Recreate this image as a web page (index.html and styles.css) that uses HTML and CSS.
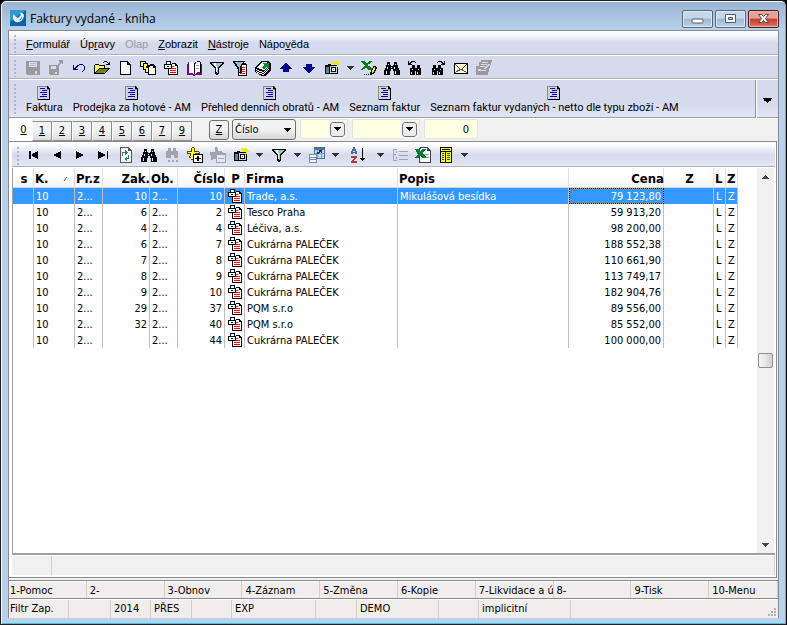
FILE: index.html
```html
<!DOCTYPE html>
<html lang="cs">
<head>
<meta charset="utf-8">
<title>Faktury vydané - kniha</title>
<link rel="stylesheet" href="styles.css">
</head>
<body>
<svg class="sprite" aria-hidden="true">
  <symbol id="save" viewBox="0 0 16 16"><path fill="#9b9b9b" d="M1 1h14v14H2l-1-1z"/><path fill="#d5daed" d="M4 2h8v5H4zM10 11h2v3h-2z"/><path fill="#b8bccb" d="M5 3h6v1H5zM5 5h6v1H5z"/></symbol>
  <symbol id="saveas" viewBox="0 0 16 16"><path fill="#9b9b9b" d="M1 5h10v10H2l-1-1zM11 0h4v4h-1V3h-1v1h-1v1h-1v1h-1V4h1V3h1V2h-1z"/><path fill="#d5daed" d="M3 6h5v3H3zM7 12h2v2H7z"/></symbol>
  <symbol id="undo" viewBox="0 0 16 16"><path fill="#00008b" d="M2 5h1v3h1V7h1V6h1V5h2V4h4v1h1v1h1v4h-1v1h-1v1h-1v-1h1v-1h1V6h-1V5H8v1H7v1H6v1H5v1h2v1H2z"/></symbol>
  <symbol id="open" viewBox="0 0 16 16"><path d="M0 5h1V4h4v1h6v3h5v1h-1v1h-1v1h-1v1h-1v1h-1v1H0zM9 2h1V1h3v1h1v1h1V2h1v3h-4V4h2V3h-1V2h-3v1H9z"/><path fill="#ffff66" d="M1 5h4v1h5v2H5v1H4v1H3v1H2v1H1z"/><path fill="#808000" d="M5 9h9v1h-1v1h-1v1h-1v1H2v-1h1v-1h1v-1h1z"/></symbol>
  <symbol id="page" viewBox="0 0 16 16"><path d="M3 1h8v1h1v1h1v1h1v11H3z"/><path fill="#fff" d="M4 2h6v3h3v9H4z"/></symbol>
  <symbol id="copies" viewBox="0 0 16 16"><path d="M0 1h6v2h2v2h2V4h4v1h1v1h1v9H8v-2H5v-3H3V7H0z"/><path fill="#ffff66" d="M1 2h4v1H3v3H1zM4 4h3v2H6v3H4z"/><path fill="#fff" d="M10 6h3v2h2v6H9V7h1z"/><path fill="#ffff66" d="M6 8h2v4H6z"/></symbol>
  <symbol id="lockdoc" viewBox="0 0 16 16"><path d="M3 1h5v3h1V3h4v1h1v1h1v10H5V9H1V4h2z"/><path fill="#fff" d="M4 2h3v2H4zM2 5h6v3H2zM9 4h3v2h2v8H6V9h3z"/><path d="M4 6h2v1H4z"/><path fill="#f00000" d="M9 6h2v1H9zM9 8h4v1H9zM7 10h6v1H7zM7 12h6v1H7z"/></symbol>
  <symbol id="book" viewBox="0 0 16 16"><path fill="#800080" d="M1 4h1V2h5v1h2V2h5v2h2v11H9v1H7v-1H1z"/><path fill="#fff" d="M3 2h4v1h1v11H7v-1H3zM9 4h1V2h1V1h3v11h-3v1h-1v1H9z"/><path fill="#000" d="M8 3h1v11H8zM11 1h3v1h-3zM14 2h1v11h-1z"/><path fill="#999" d="M10 5h3v1h-3zM10 8h3v1h-3z"/></symbol>
  <symbol id="funnel" viewBox="0 0 16 16"><path d="M1 2h14v2h-1v1h-1v1h-1v1h-1v1h-1v6H9v1H7v-1H6V8H5V7H4V6H3V5H2V4H1z"/><path fill="#8cc" d="M3 3h10v1h-1v1h-1v1h-1v1H9v6H8V7H6V6H5V5H4V4H3z"/><path fill="#fff" d="M5 3h2v3h1v6H7V7H6V6H5z"/></symbol>
  <symbol id="funneldoc" viewBox="0 0 16 16"><path d="M1 1h12v1h-1v1h2v1h1v12H6V9H5V7H4V6H3V4H2V3H1z"/><path fill="#8cc" d="M3 2h8v1h-1v1H9v2H8v6H7V7H6V6H5V4H4V3H3z"/><path fill="#fff" d="M10 5h4v10H7v-2h3z"/><path fill="#f00000" d="M10 7h3v1h-3zM10 9h3v1h-3zM9 11h4v1H9zM8 13h5v1H8z"/></symbol>
  <symbol id="stack" viewBox="0 0 16 16"><path d="M6 1h7l3 3v6l-6 6H7l-7-4V7z"/><path fill="#fff" d="M7 2h5l2 3-5 5-7-2zM1 9l7 3 6-5v1l-6 5-7-3zM1 11l7 3 6-5v1l-6 5-7-3z"/><path fill="#008838" d="M8 3h6v5h-2V7L9 9 6 8l4-3-2-1z"/></symbol>
  <symbol id="up" viewBox="0 0 16 16"><path fill="#00008b" d="M7 3h2v1h1v1h1v1h1v1h1v1h1v1h-3v3H5V9H2V8h1V7h1V6h1V5h1V4h1z"/></symbol>
  <symbol id="down" viewBox="0 0 16 16"><path fill="#00008b" d="M5 4h6v3h3v1h-1v1h-1v1h-1v1h-1v1H9v1H7v-1H6v-1H5v-1H4V9H3V8H2V7h3z"/></symbol>
  <symbol id="camera" viewBox="0 0 16 16"><path d="M1 5h3V4h3v1h7v9H1z"/><path fill="#51898f" d="M2 7h3v6H2z"/><path fill="#c9d2d8" d="M6 6h7v7H6z"/><path d="M7 7h5v5H7z"/><path fill="#fff" d="M8 8h3v3H8z"/><path fill="#268" d="M9 9h1v1H9z"/><path fill="#f1e800" d="M8 1h2v1h1V1h2v1h2v2h1v1h-2v2h-1V5h-3V4H8V3h1V2H8z"/></symbol>
  <symbol id="excelpen" viewBox="0 0 16 16"><path fill="#087b17" d="M0 1h4v1h1v1h2V2h1V1h3v1h-1v1H9v1H7v2h2v1h1v1h1v2H7V9H6V8H4v1H2v1H0V9h1V8h1V7h1V6h1V5H3V4H2V3H1V2H0z"/><path d="M3 14h1v1H3zM5 14h1v1H5zM7 14h1v1H7zM9 15v-3h1v-2h1V8h1V6h3v1h1v2h-1v2h-1v2h-1v1h-2v1z"/><path fill="#ffef00" d="M11 10h1V8h1V7h1v3h-1v2h-1v1h-1z"/></symbol>
  <symbol id="find" viewBox="0 0 16 16"><path d="M3 2h3v3h1v1h2V5h1V2h3v3h1v3h1v2h1v5h-6v-4H9V9H7v2H6v4H0v-5h1V8h1V5h1z"/><path fill="#e7ecf7" d="M4 4h1v1H4zM3 7h1v2H3zM2 11h1v3H2zM11 4h1v1h-1zM10 7h1v2h-1zM11 11h1v3h-1zM7 7h1v1H7z"/></symbol>
  <symbol id="findprev" viewBox="0 0 16 16"><path d="M5 5h3v3h2V5h3v3h1v7H9v-4H8v4H3V8h2zM1 1h1v2h1V2h1V1h4v1h1v1H8V2H5v1H4v1h1v1H1z"/><path fill="#dce2ef" d="M5 9h1v1H5zM4 12h1v2H4zM11 9h1v1h-1zM10 12h1v2h-1z"/></symbol>
  <symbol id="findnext" viewBox="0 0 16 16"><path d="M3 5h3v3h2V5h3v3h2v7H8v-4H7v4H2V8h1zM15 1h-1v2h-1V2h-1V1H8v1H7v1h1V2h3v1h1v1h-1v1h4z"/><path fill="#dce2ef" d="M4 9h1v1H4zM3 12h1v2H3zM10 9h1v1h-1zM9 12h1v2H9z"/></symbol>
  <symbol id="mail" viewBox="0 0 16 16"><path d="M1 3h14v11H1z"/><path fill="#fffbd0" d="M2 4h12v9H2z"/><path fill="#555" d="M2 4l6 5 6-5v1L9 9l5 3v1L8 10l-6 3v-1l5-3-5-4z"/></symbol>
  <symbol id="edit" viewBox="0 0 16 16"><path fill="#9b9b9b" d="M5 0h11v2h-1v3h-1v3h-1v4h-1v3H0V6h3V2h2z"/><path fill="#d5daed" d="M6 2h6v1H6zM5 4h6v1H5zM4 6h5v1H4zM12 4h2L9 9H7zM2 9h3v1h5v1H2z"/></symbol>
  <symbol id="form" viewBox="0 0 16 16"><path fill="#8a8a8a" d="M1 1h12v14H1z"/><path fill="#d0d2d8" d="M2 2h9v3h2v9H2z"/><path d="M11 1h1v1h1v1h1v12H2v-1h11V4h-2z"/><path fill="#0000b0" d="M4 3h5v1H4zM6 5h5v1H6zM4 7h7v1H4zM6 9h5v1H6zM4 11h7v1H4z"/></symbol>
  <symbol id="first" viewBox="0 0 16 16"><path d="M3 4h2v8H3zM12 4v8h-1v-1H9v-1H7V9H6V7h1V6h2V5h2V4z"/></symbol>
  <symbol id="prev" viewBox="0 0 16 16"><path d="M12 4v8h-1v-1H9v-1H7V9H5V7h2V6h2V5h2V4z"/></symbol>
  <symbol id="next" viewBox="0 0 16 16"><path d="M4 4v8h1v-1h2v-1h2V9h2V7H9V6H7V5H5V4z"/></symbol>
  <symbol id="last" viewBox="0 0 16 16"><path d="M12 4h1v8h-1zM3 4v8h1v-1h2v-1h2V9h2V7H8V6H6V5H4V4z"/></symbol>
  <symbol id="refresh" viewBox="0 0 16 16"><path fill="#555" d="M2 0h9v1h1v1h1v1h1v13H2z"/><path fill="#f4faf4" d="M3 1h7v3h3v11H3z"/><path fill="#496f83" d="M7 3l3 2-3 3V6H5v3H4V5h3zM9 14l-3-2 3-3v2h1V8h1v4H9z"/></symbol>
  <symbol id="findgray" viewBox="0 0 16 16"><path fill="#a3a4ab" d="M4 1h3v3h2V1h3v3h2v7h-4V8H7v3H2V4h2zM4 13h2v2H4zM8 13h2v2H8zM12 13h2v2h-2z"/></symbol>
  <symbol id="star" viewBox="0 0 16 16"><path fill="#4c4c00" d="M5 0h2v1h1v3h4v1h1v2H9v4H7v2H4v-2H2V9h1V7H0V4h4V1h1z"/><path fill="#ffff38" d="M5 1h2v4h5v1H8v3H6v3H4v-2H3V9h1V6H1V5h4z"/><path d="M6 7h10v9H6z"/><path fill="#fff" d="M7 8h8v7H7z"/><path d="M8 11h6v1H8zM10 9h2v5h-2z"/></symbol>
  <symbol id="stargray" viewBox="0 0 16 16"><path fill="#a3a4ab" d="M5 0h2v1h1v3h4v1h1v1h3v10H6v-4H3v1H1V8H0V5h5z"/><path fill="#e3e6f2" d="M7 8h8v7H7z"/><path fill="#a3a4ab" d="M8 11h6v1H8z"/></symbol>
  <symbol id="detail" viewBox="0 0 16 16"><path fill="#4472a8" d="M5 0h11v12H5z"/><path fill="#c3d7f0" d="M6 3h9v8H6z"/><path fill="#7d9cc2" d="M8 3h1v8H8zM12 3h1v8h-1zM6 6h9v1H6z"/><path fill="#6d8bad" d="M0 7h8v9H0z"/><path fill="#fff" d="M1 8h6v2H1zM1 11h6v1H1zM1 13h6v2H1z"/><path fill="#234" d="M8 7V5h2V3h3v3h-1V5h-1v1h-1v1z"/></symbol>
  <symbol id="sort" viewBox="0 0 16 16"><path fill="#416c9b" fill-rule="evenodd" d="M3 0h2v2h1v2h1v3H5V6H3v1H1V4h1V2h1zM3 4v1h2V4z"/><path fill="#b13c3c" d="M1 9h6v2H6v1H5v1H4v1h3v2H1v-2h1v-1h1v-1h1v-1H1z"/><path d="M12 1h1v10h2v1h-1v1h-1v1h-1v-1h-1v-1h-1v-1h2z"/></symbol>
  <symbol id="group" viewBox="0 0 16 16"><path fill="#a3a4ab" d="M1 2h4v1H2v4h2v1H2v5h3v1H1zM4 4h1v2H4zM4 10h1v2H4zM7 4h9v1H7zM7 8h9v1H7zM7 12h9v1H7z"/></symbol>
  <symbol id="excel" viewBox="0 0 16 16"><path fill="#444" d="M5 0h8v1h1v1h1v1h1v13H4V1h1z"/><path fill="#fff" d="M6 1h6v3h3v11H5V2h1z"/><path fill="#999" d="M9 7h5v1H9zM9 10h5v1H9z"/><path fill="#087b37" d="M0 2h4v1h1v1h1V3h1V2h4v1h-1v1H9v1H8v2h1v1h1v1h1v2H7v-1H6V9H5v1H4v1H0v-1h1V9h1V8h1V7H2V5H1V3H0z"/></symbol>
  <symbol id="columns" viewBox="0 0 16 16"><path d="M2 0h12v16H2z"/><path fill="#ffff18" d="M3 1h10v3H3zM3 5h4v10H3zM8 5h5v10H8z"/><path fill="#111" d="M4 2h8v1H4z"/><path fill="#0050a0" d="M4 6h2v1H4zM4 8h2v1H4zM4 10h2v1H4zM4 12h2v1H4zM9 6h3v1H9zM9 8h3v1H9zM9 10h3v1H9zM9 12h3v1H9z"/></symbol>
  <symbol id="caret" viewBox="0 0 7 4"><path d="M0 0h7v1H6v1H5v1H4v1H3V3H2V2H1V1H0z"/></symbol>
</svg>

<div class="window">
  <header class="titlebar">
    <svg class="app-icon" viewBox="0 0 16 16" aria-hidden="true"><rect width="16" height="16" fill="#0b62a6"/><path fill="#2f9bd0" d="M0 0h16L0 12z"/><path fill="#eaf6fc" d="M4 4c-2 3-1 7 2 8 4 1 7-2 8-6 0-2-2-4-4-3 1 1 1 2 0 3L8 8 6 7C5 6 4 5 4 4z"/><path fill="#187bbb" d="M8 10c2 0 3-2 4-4 0 3-1 5-4 4z"/></svg>
    <h1 class="title">Faktury vydané - kniha</h1>
    <div class="window-buttons">
      <button class="winbtn" aria-label="Minimalizovat"><svg viewBox="0 0 29 16"><rect x="9" y="8" width="11" height="4" rx="1" fill="#fff" stroke="#545b6b"/></svg></button>
      <button class="winbtn" aria-label="Obnovit"><svg viewBox="0 0 29 16"><path fill="#fff" stroke="#545b6b" fill-rule="evenodd" d="M9.500 3.500h10v8h-10zM12.500 6.500h4v2h-4z"/></svg></button>
      <button class="winbtn close" aria-label="Zavřít"><svg viewBox="0 0 29 16"><path fill="#fff" stroke="#5b3a40" d="M9.500 3.500h3l2 2 2-2h3l-3 4 3 4h-3l-2-2-2 2h-3l3-4z"/></svg></button>
    </div>
  </header>

  <div class="client">
    <nav class="menubar grip">
      <button><u>F</u>ormulář</button><button>Úp<u>r</u>avy</button><button disabled>Olap</button><button><u>Z</u>obrazit</button><button><u>N</u>ástroje</button><button>Nápo<u>v</u>ěda</button>
    </nav>

    <div class="toolbar grip">
      <button aria-label="Uložit"><svg><use href="#save"/></svg></button>
      <button aria-label="Uložit jako"><svg><use href="#saveas"/></svg></button>
      <button aria-label="Zpět"><svg><use href="#undo"/></svg></button>
      <button aria-label="Otevřít"><svg><use href="#open"/></svg></button>
      <button aria-label="Nový"><svg><use href="#page"/></svg></button>
      <button aria-label="Kopie"><svg><use href="#copies"/></svg></button>
      <button aria-label="Zamknout"><svg><use href="#lockdoc"/></svg></button>
      <button aria-label="Kniha"><svg><use href="#book"/></svg></button>
      <button aria-label="Filtr"><svg><use href="#funnel"/></svg></button>
      <button aria-label="Filtr dokladu"><svg><use href="#funneldoc"/></svg></button>
      <button aria-label="Tisk"><svg><use href="#stack"/></svg></button>
      <button aria-label="Nahoru"><svg><use href="#up"/></svg></button>
      <button aria-label="Dolů"><svg><use href="#down"/></svg></button>
      <button aria-label="Snímek"><svg><use href="#camera"/></svg></button>
      <button class="drop" aria-label="Další volby"><svg><use href="#caret"/></svg></button>
      <button aria-label="Export"><svg><use href="#excelpen"/></svg></button>
      <button aria-label="Hledat"><svg><use href="#find"/></svg></button>
      <button aria-label="Hledat předchozí"><svg><use href="#findprev"/></svg></button>
      <button aria-label="Hledat další"><svg><use href="#findnext"/></svg></button>
      <button aria-label="Pošta"><svg><use href="#mail"/></svg></button>
      <button aria-label="Upravit"><svg><use href="#edit"/></svg></button>
    </div>

    <div class="shortcuts grip">
      <button><svg><use href="#form"/></svg>Faktura</button>
      <button><svg><use href="#form"/></svg>Prodejka za hotové - AM</button>
      <button><svg><use href="#form"/></svg>Přehled denních obratů - AM</button>
      <button><svg><use href="#form"/></svg>Seznam faktur</button>
      <button><svg><use href="#form"/></svg>Seznam faktur vydaných - netto dle typu zboží - AM</button>
      <button class="more" aria-label="Více"><svg><use href="#caret"/></svg></button>
    </div>

    <div class="tabrow">
      <div class="tabs">
        <button class="tab active"><u>0</u></button><button class="tab"><u>1</u></button><button class="tab"><u>2</u></button><button class="tab"><u>3</u></button><button class="tab"><u>4</u></button><button class="tab"><u>5</u></button><button class="tab"><u>6</u></button><button class="tab"><u>7</u></button><button class="tab"><u>9</u></button>
      </div>
      <button class="zbtn"><u>Z</u></button>
      <div class="combo"><select aria-label="Řadit podle"><option>Číslo</option></select><svg><use href="#caret"/></svg></div>
      <div class="field from"><input aria-label="Od"><button aria-label="Vybrat od"><svg><use href="#caret"/></svg></button></div>
      <div class="field to"><input aria-label="Do"><button aria-label="Vybrat do"><svg><use href="#caret"/></svg></button></div>
      <div class="field count"><input aria-label="Počet" value="0"></div>
    </div>

    <main class="panel">
      <div class="toolbar gridbar grip">
        <button aria-label="První"><svg><use href="#first"/></svg></button>
        <button aria-label="Předchozí"><svg><use href="#prev"/></svg></button>
        <button aria-label="Následující"><svg><use href="#next"/></svg></button>
        <button aria-label="Poslední"><svg><use href="#last"/></svg></button>
        <button aria-label="Obnovit data"><svg><use href="#refresh"/></svg></button>
        <button aria-label="Hledat v seznamu"><svg><use href="#find"/></svg></button>
        <button aria-label="Hledat dál"><svg><use href="#findgray"/></svg></button>
        <button aria-label="Přidat značku"><svg><use href="#star"/></svg></button>
        <button aria-label="Odebrat značku"><svg><use href="#stargray"/></svg></button>
        <button aria-label="Snímek seznamu"><svg><use href="#camera"/></svg></button>
        <button class="drop" aria-label="Volby snímku"><svg><use href="#caret"/></svg></button>
        <button aria-label="Filtrovat"><svg><use href="#funnel"/></svg></button>
        <button class="drop" aria-label="Volby filtru"><svg><use href="#caret"/></svg></button>
        <button aria-label="Podrobnosti"><svg><use href="#detail"/></svg></button>
        <button class="drop" aria-label="Volby podrobností"><svg><use href="#caret"/></svg></button>
        <button class="wide" aria-label="Seřadit"><svg><use href="#sort"/></svg></button>
        <button class="drop" aria-label="Volby řazení"><svg><use href="#caret"/></svg></button>
        <button aria-label="Seskupit"><svg><use href="#group"/></svg></button>
        <button aria-label="Export do Excelu"><svg><use href="#excel"/></svg></button>
        <button aria-label="Sloupce"><svg><use href="#columns"/></svg></button>
        <button class="drop" aria-label="Volby sloupců"><svg><use href="#caret"/></svg></button>
      </div>

      <div class="grid">
        <div class="grid-body">
          <table>
            <colgroup><col class="c-s"><col class="c-k"><col class="c-pr"><col class="c-num"><col class="c-ob"><col class="c-num"><col class="c-p"><col class="c-firma"><col class="c-popis"><col class="c-cena"><col class="c-z"><col class="c-l"><col class="c-l"></colgroup>
            <thead>
              <tr><th class="mid">s</th><th><span class="sorted">K.<svg viewBox="0 0 5 6" aria-hidden="true"><path d="M1 5L4 1" stroke="#555" fill="none"/></svg></span></th><th>Pr.z</th><th class="num">Zak.</th><th>Ob.</th><th class="num">Číslo</th><th class="mid">P</th><th>Firma</th><th>Popis</th><th class="num">Cena</th><th class="mid">Z</th><th>L</th><th>Z</th></tr>
            </thead>
            <tbody>
              <tr class="selected"><td></td><td>10</td><td>2...</td><td class="num">10</td><td>2...</td><td class="num">10</td><td class="lock"><svg><use href="#lockdoc"/></svg></td><td>Trade, a.s.</td><td>Mikulášová besídka</td><td class="num focus">79 123,80</td><td></td><td>L</td><td>Z</td></tr>
              <tr><td></td><td>10</td><td>2...</td><td class="num">6</td><td>2...</td><td class="num">2</td><td class="lock"><svg><use href="#lockdoc"/></svg></td><td>Tesco Praha</td><td></td><td class="num">59 913,20</td><td></td><td>L</td><td>Z</td></tr>
              <tr><td></td><td>10</td><td>2...</td><td class="num">4</td><td>2...</td><td class="num">4</td><td class="lock"><svg><use href="#lockdoc"/></svg></td><td>Léčiva, a.s.</td><td></td><td class="num">98 200,00</td><td></td><td>L</td><td>Z</td></tr>
              <tr><td></td><td>10</td><td>2...</td><td class="num">6</td><td>2...</td><td class="num">7</td><td class="lock"><svg><use href="#lockdoc"/></svg></td><td>Cukrárna PALEČEK</td><td></td><td class="num">188 552,38</td><td></td><td>L</td><td>Z</td></tr>
              <tr><td></td><td>10</td><td>2...</td><td class="num">7</td><td>2...</td><td class="num">8</td><td class="lock"><svg><use href="#lockdoc"/></svg></td><td>Cukrárna PALEČEK</td><td></td><td class="num">110 661,90</td><td></td><td>L</td><td>Z</td></tr>
              <tr><td></td><td>10</td><td>2...</td><td class="num">8</td><td>2...</td><td class="num">9</td><td class="lock"><svg><use href="#lockdoc"/></svg></td><td>Cukrárna PALEČEK</td><td></td><td class="num">113 749,17</td><td></td><td>L</td><td>Z</td></tr>
              <tr><td></td><td>10</td><td>2...</td><td class="num">9</td><td>2...</td><td class="num">10</td><td class="lock"><svg><use href="#lockdoc"/></svg></td><td>Cukrárna PALEČEK</td><td></td><td class="num">182 904,76</td><td></td><td>L</td><td>Z</td></tr>
              <tr><td></td><td>10</td><td>2...</td><td class="num">29</td><td>2...</td><td class="num">37</td><td class="lock"><svg><use href="#lockdoc"/></svg></td><td>PQM s.r.o</td><td></td><td class="num">89 556,00</td><td></td><td>L</td><td>Z</td></tr>
              <tr><td></td><td>10</td><td>2...</td><td class="num">32</td><td>2...</td><td class="num">40</td><td class="lock"><svg><use href="#lockdoc"/></svg></td><td>PQM s.r.o</td><td></td><td class="num">85 552,00</td><td></td><td>L</td><td>Z</td></tr>
              <tr><td></td><td>10</td><td>2...</td><td class="num"></td><td>2...</td><td class="num">44</td><td class="lock"><svg><use href="#lockdoc"/></svg></td><td>Cukrárna PALEČEK</td><td></td><td class="num">100 000,00</td><td></td><td>L</td><td>Z</td></tr>
            </tbody>
          </table>
        </div>
        <div class="scrollbar">
          <button aria-label="Posunout nahoru"><svg class="flip"><use href="#caret"/></svg></button>
          <div class="thumb"></div>
          <button aria-label="Posunout dolů"><svg><use href="#caret"/></svg></button>
        </div>
      </div>
      <div class="gridfoot"><span></span><span></span></div>
    </main>

    <div class="fkeys">
      <button>1-Pomoc</button><button>2-</button><button>3-Obnov</button><button>4-Záznam</button><button>5-Změna</button><button>6-Kopie</button><button>7-Likvidace a úč</button><button>8-</button><button>9-Tisk</button><button>10-Menu</button>
    </div>
    <footer class="status">
      <span>Filtr Zap.</span><span></span><span>2014</span><span>PŘES</span><span></span><span>EXP</span><span></span><span>DEMO</span><span></span><span>implicitní</span><span class="rest"><svg viewBox="0 0 8 8" aria-hidden="true"><path fill="#b5b0b0" d="M6 0h2v2H6zM3 3h2v2H3zM6 3h2v2H6zM0 6h2v2H0zM3 6h2v2H3zM6 6h2v2H6z"/></svg></span>
    </footer>
  </div>
</div>
</body>
</html>
```
FILE: styles.css
```css
:root {
  --ui: "DejaVu Sans Condensed", "DejaVu Sans", sans-serif;
  --menu: "Liberation Sans", sans-serif;
  --line: #a0a0a4;
  --bar: #d5daed;
}

* { box-sizing: border-box; }

body {
  margin: 0;
  background: #000;
  font: 11px/16px var(--ui);
  color: #000;
}

button, input, select {
  margin: 0;
  padding: 0;
  border: 0;
  background: none;
  font: inherit;
  color: inherit;
}

svg { display: block; shape-rendering: crispEdges; }
.sprite { position: absolute; width: 0; height: 0; }

.window {
  display: flex;
  flex-direction: column;
  min-height: 100vh;
  padding: 0 7px 6px;
  border: 1px solid #202028;
  border-right-color: #000;
  border-radius: 6px 6px 0 0;
  background: linear-gradient(#98b3d2 0, #b9d1ea 30px, #b9d1ea 100%);
  box-shadow: inset 1px 1px 0 #f2f8fd, inset -1px -1px 0 #3cc5d8;
}

/* Title bar */
.titlebar {
  display: flex;
  align-items: center;
  height: 29px;
  padding: 4px 0 0 2px;
}
.app-icon { width: 16px; height: 16px; shape-rendering: auto; }
.title {
  flex: 1;
  margin: 0;
  padding: 2px 0 0 4px;
  font: 12px/18px "Open Sans", "Noto Sans", sans-serif;
}
.window-buttons { display: flex; gap: 2px; padding-top: 2px; }
.winbtn {
  width: 31px;
  height: 18px;
  border: 1px solid #54687f;
  border-radius: 2px;
  background: linear-gradient(#c6d7ea 0 45%, #9fb8d2 50%, #bcd2e8);
  box-shadow: inset 0 0 0 1px #dce9f5;
}
.winbtn svg { width: 29px; height: 16px; shape-rendering: auto; }
.winbtn.close {
  border-color: #4c1a22;
  background: linear-gradient(#e5a196 0 45%, #bf3c27 50%, #d47a62);
  box-shadow: inset 0 0 0 1px #e9b3a8;
}

/* Client area */
.client {
  flex: 1;
  display: flex;
  flex-direction: column;
  border: 1px solid #8a8a8e;
  border-width: 1px 1px 0;
  background: #f0f0f0;
}
.grip { position: relative; padding-left: 12px; }
.grip::before {
  content: "";
  position: absolute;
  left: 5px;
  top: 4px;
  bottom: 2px;
  width: 2px;
  background: repeating-linear-gradient(#b1b5c6 0 2px, transparent 2px 4px);
}

.menubar {
  display: flex;
  height: 25px;
  gap: 10px;
  padding-left: 17px;
  border-bottom: 1px solid #fff;
  box-shadow: inset 0 -1px 0 #b0b0b4;
  background: linear-gradient(#fff 0, #f8f9fc 4px, var(--bar) 12px);
  font-family: var(--menu);
}
.menubar button { padding-top: 2px; }
.menubar button:disabled { color: #9c9ca4; }

.toolbar {
  display: flex;
  align-items: center;
  height: 24px;
  border-bottom: 1px solid #fff;
  box-shadow: inset 0 -1px 0 #b0b0b4;
  background: var(--bar);
}
.toolbar button { display: grid; place-items: center; width: 23px; height: 20px; }
.toolbar svg { width: 16px; height: 16px; }
.toolbar .drop { width: 14px; }
.toolbar .drop svg { width: 7px; height: 4px; fill: #333; }
.toolbar .wide { width: 30px; }

.shortcuts {
  display: flex;
  height: 39px;
  border-bottom: 1px solid #fff;
  box-shadow: inset 0 -1px 0 #9c9ca4;
  background: linear-gradient(var(--bar) 60%, #e2e6f6);
  font-family: Roboto, var(--menu);
  white-space: nowrap;
}
.shortcuts button {
  display: flex;
  flex-direction: column;
  align-items: center;
  padding: 5px 5px 0;
  line-height: 14px;
}
.shortcuts svg { width: 16px; height: 16px; }
.shortcuts .more {
  width: 23px;
  margin-left: auto;
  padding: 18px 0 0;
  border-left: 1px solid #8f93a0;
  box-shadow: inset 1px 0 0 #fff;
}
.shortcuts .more svg { width: 9px; height: 5px; }

/* View tabs and lookup fields */
.tabrow { display: flex; height: 22px; padding-right: 1px; }
.tabs { display: flex; align-items: flex-end; }
.tab {
  width: 20px;
  height: 20px;
  border: 1px solid #8c8e94;
  border-left-color: #fff;
  background: linear-gradient(#f2f2f2 50%, #dcdcdc);
  line-height: 18px;
}
.tab.active { width: 23px; height: 22px; padding-left: 6px; background: #fff; border: 0; line-height: 22px; }
.zbtn {
  width: 20px;
  height: 20px;
  margin-left: 17px;
  margin-top: 1px;
  border: 1px solid #707070;
  border-radius: 3px;
  background: linear-gradient(#f2f2f2 50%, #d4d4d4);
}
.combo { position: relative; width: 64px; height: 21px; margin-left: 3px; }
.combo select {
  width: 100%;
  height: 100%;
  padding-left: 2px;
  border: 1px solid #707070;
  border-radius: 3px;
  appearance: none;
  background: linear-gradient(#f2f2f2 50%, #d4d4d4);
}
.combo svg { position: absolute; right: 5px; top: 9px; width: 7px; height: 4px; pointer-events: none; }
.field {
  display: flex;
  align-items: center;
  height: 20px;
  margin-left: 4px;
  border: 1px solid #e2e3ea;
  border-radius: 2px;
  background: #ffffe1;
}
.field input { flex: 1; min-width: 0; height: 18px; }
.field button {
  display: grid;
  place-items: center;
  width: 15px;
  height: 15px;
  margin: 2px;
  border: 1px solid #707070;
  border-radius: 3px;
  background: #ececec;
  outline: 2px solid #f4f4f4;
}
.field button svg { width: 7px; height: 4px; }
.from { width: 48px; }
.to { width: 68px; }
.count { width: 54px; }
.count input { padding-right: 8px; text-align: right; }

/* Data panel */
.panel {
  flex: 1;
  display: flex;
  flex-direction: column;
  margin-right: 1px;
  padding: 1px 1px 2px 3px;
  border: 1px solid #8a8a8e;
  border-left: 0;
  background: #fff;
}
.gridbar {
  height: 25px;
  padding-left: 10px;
  background: linear-gradient(#fff 0, #f8f9fc 3px, var(--bar) 12px, #e4e8f6);
}
.gridbar .drop { width: 15px; }
.grid {
  flex: 1;
  display: flex;
  padding-right: 1px;
  border: 1px solid #a0a0a0;
  border-width: 0 0 2px 1px;
}
.grid-body { flex: 1; overflow: hidden; }
table { width: 725px; table-layout: fixed; border-collapse: collapse; }
.c-s { width: 21px; }
.c-k { width: 41px; }
.c-pr, .c-ob { width: 28px; }
.c-num { width: 47px; }
.c-p { width: 20px; }
.c-firma { width: 153px; }
.c-popis { width: 171px; }
.c-cena { width: 95px; }
.c-z { width: 50px; }
.c-l { width: 12px; }
th, td {
  height: 16px;
  overflow: hidden;
  text-align: left;
  white-space: nowrap;
  box-shadow: inset -1px 0 0 #c0c0c0;
}
th {
  height: 20px;
  padding: 2px 0 0 1px;
  font-size: 13px;
  line-height: 18px;
  background: linear-gradient(#fff 40%, #f3f4f6);
  box-shadow: inset -1px 0 0 #e0e0e4, inset 0 -1px 0 #d5d5d5;
}
.sorted { display: flex; align-items: center; gap: 14px; }
.sorted svg { width: 5px; height: 6px; shape-rendering: auto; }
td { padding: 2px 3px 0 2px; line-height: 14px; }
.num { text-align: right; }
.mid { text-align: center; }
td.lock { padding: 0 0 0 2px; }
.lock svg { width: 16px; height: 16px; }
.selected td { background: #3399ff; color: #fff; }
.selected td.focus { outline: 1px dotted #000; outline-offset: -1px; box-shadow: inset 0 0 0 1px #e08a2c; }

.scrollbar {
  display: flex;
  flex-direction: column;
  justify-content: space-between;
  align-items: center;
  width: 17px;
  background: #f0f0f0;
}
.scrollbar button { display: grid; place-items: center; width: 17px; height: 17px; }
.scrollbar svg { width: 7px; height: 4px; fill: #444; }
.flip { transform: rotate(180deg); }
.thumb {
  width: 15px;
  height: 15px;
  border: 1px solid #8f8f8f;
  border-radius: 2px;
  background: linear-gradient(90deg, #f5f5f5, #e6e6e6 50%, #cfcfcf);
}
.gridfoot {
  display: grid;
  grid-template-columns: 39px 1fr;
  height: 19px;
  margin-top: 1px;
  padding-left: 1px;
  background: #f0f0f0;
}
.gridfoot span { border-right: 1px solid #d0d0d0; }

/* Function keys and status bar */
.fkeys {
  display: grid;
  grid-template-columns: repeat(9, 78fr) 69fr;
  height: 19px;
  margin-top: 2px;
  border-top: 1px solid #8a8a8e;
  border-bottom: 1px solid #8a8a8e;
  box-shadow: inset 0 1px 0 #fff;
  background: #f1eded;
}
.fkeys button {
  min-width: 0;
  padding: 2px 0 0 3px;
  border-right: 1px solid #d2cfcf;
  overflow: hidden;
  text-align: left;
  white-space: nowrap;
}
.fkeys button:first-child { padding-left: 1px; }
.status {
  display: grid;
  grid-template-columns: 60px 42px 40px 41px 40px 84px 41px 82px 40px 92px 1fr;
  height: 19px;
  border-top: 1px solid #fff;
  background: #f1eded;
  line-height: 18px;
}
.status span { padding-left: 3px; border-right: 1px solid #d2cfcf; white-space: nowrap; }
.status span:first-child { padding-left: 1px; }
.status .rest { display: flex; justify-content: flex-end; align-items: flex-end; border: 0; padding: 0 2px 2px 0; }
.rest svg { width: 8px; height: 8px; }
```
